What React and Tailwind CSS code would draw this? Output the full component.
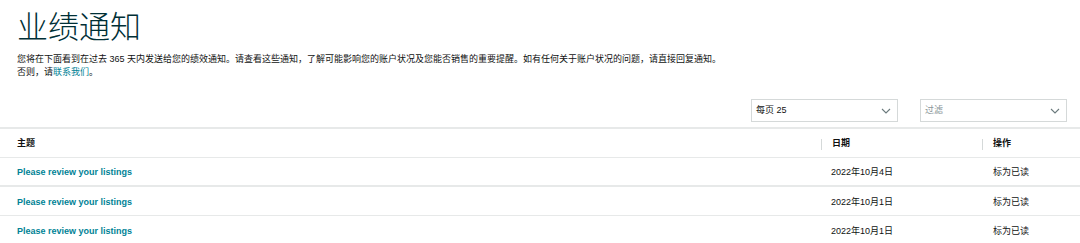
import React from "react";

const cjk = { fontFamily: '"Liberation Sans", "Noto Sans CJK SC", sans-serif' };

function Chevron() {
  return (
    <svg width="10" height="6" viewBox="0 0 10 6" className="text-[#6b7a7d]">
      <path d="M1 1 L5 5 L9 1" fill="none" stroke="currentColor" strokeWidth="1.1" />
    </svg>
  );
}

function Select({ label, muted }) {
  return (
    <div className="flex h-[23px] w-[147px] items-center justify-between border border-[#d5d9d9] bg-white pl-[4px] pr-[6px]">
      <span className={`text-[9px] ${muted ? "text-[#8a9598]" : "text-[#0f1111]"}`}>{label}</span>
      <Chevron />
    </div>
  );
}

const rows = [
  { subject: "Please review your listings", date: "2022年10月4日" },
  { subject: "Please review your listings", date: "2022年10月1日" },
  { subject: "Please review your listings", date: "2022年10月1日" },
];

export default function App() {
  return (
    <div className="h-[243px] w-[1080px] overflow-hidden bg-white" style={cjk}>
      <div className="px-[17px] pt-[10px]">
        <h1 className="text-[31px] font-light leading-[36px] text-[#002f36]">业绩通知</h1>
        <p className="mt-[7px] text-[9px] leading-[13px] text-[#0f1111]">
          您将在下面看到在过去 365 天内发送给您的绩效通知。请查看这些通知，了解可能影响您的账户状况及您能否销售的重要提醒。如有任何关于账户状况的问题，请直接回复通知。
          <br />
          否则，请<span className="text-[#008296]">联系我们</span>。
        </p>
      </div>
      <div className="mt-[20px] flex justify-end gap-[22px] pr-[13px]">
        <Select label="每页 25" />
        <Select label="过滤" muted />
      </div>
      <div className="mt-[5px] border-t-2 border-[#e7e9e9]">
        <div className="flex h-[29px] items-center border-b border-[#e7e9e9] pt-[2px] text-[9px] font-bold text-[#0f1111]">
          <div className="flex-1 pl-[17px]">主题</div>
          <div className="flex w-[161px] items-center">
            <div className="h-[11px] w-px bg-[#d5d9d9]" />
            <span className="pl-[10px]">日期</span>
          </div>
          <div className="flex w-[98px] items-center">
            <div className="h-[11px] w-px bg-[#d5d9d9]" />
            <span className="pl-[10px]">操作</span>
          </div>
        </div>
        {rows.map((r, i) => (
          <div
            key={i}
            className={`flex h-[29px] items-center pt-[3px] text-[9px] ${i === 0 ? "border-b-2" : "border-b"} border-[#e7e9e9]`}
          >
            <div className="flex-1 pl-[17px] font-bold text-[#008296]">{r.subject}</div>
            <div className="w-[161px] pl-[10px] text-[#0f1111]">{r.date}</div>
            <div className="w-[98px] pl-[11px] text-[#0f1111]">标为已读</div>
          </div>
        ))}
      </div>
    </div>
  );
}
